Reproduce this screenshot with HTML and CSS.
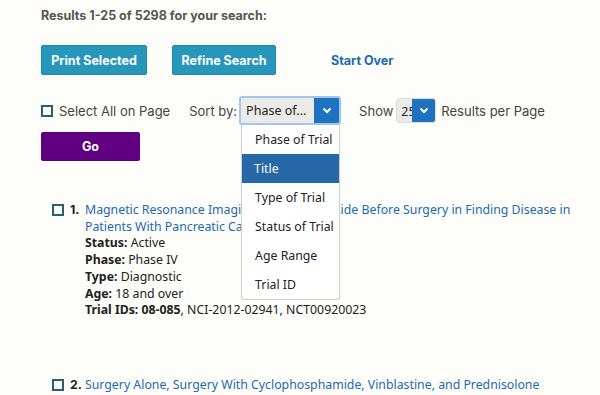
FILE: index.html
```html
<!DOCTYPE html>
<html lang="en">
  <head>
    <meta charset="UTF-8" />
    <title>Clinical Trials Search Results</title>
    <link rel="stylesheet" href="styles.css">
  </head>
  <body>
    <div class="page">
      <h3 class="summary">Results 1-25 of 5298 for your search:</h3>

      <div class="actions">
        <button class="btn btn-teal">Print Selected</button>
        <button class="btn btn-teal">Refine Search</button>
        <a class="start-over" href="#">Start Over</a>
      </div>

      <div class="controls">
        <label class="check-label"><span class="box"></span>Select All on Page</label>
        <span class="sort-label">Sort by:</span>
        <div class="select-wrap">
          <div class="select sort-select">
            <span class="select-text">Phase of...</span>
            <span class="select-arrow">
              <svg width="10" height="7" viewBox="0 0 10 7"><path d="M1.5 1.5 L5 5 L8.5 1.5" fill="none" stroke="#fff" stroke-width="2"/></svg>
            </span>
          </div>
          <ul class="dropdown">
            <li>Phase of Trial</li>
            <li class="active">Title</li>
            <li>Type of Trial</li>
            <li>Status of Trial</li>
            <li>Age Range</li>
            <li>Trial ID</li>
          </ul>
        </div>
        <span class="show-label">Show</span>
        <div class="select per-page">
          <span class="select-text">25</span>
          <span class="select-arrow">
            <svg width="10" height="7" viewBox="0 0 10 7"><path d="M1.5 1.5 L5 5 L8.5 1.5" fill="none" stroke="#fff" stroke-width="2"/></svg>
          </span>
        </div>
        <span class="per-page-label">Results per Page</span>
      </div>

      <button class="btn btn-go">Go</button>

      <ol class="results">
        <li class="result">
          <span class="box"></span>
          <span class="num">1.</span>
          <div class="result-body">
            <a href="#">Magnetic Resonance Imaging With Ferumoxide Before Surgery in Finding Disease in Patients With Pancreatic Cancer</a>
            <div><b>Status:</b> Active</div>
            <div><b>Phase:</b> Phase IV</div>
            <div><b>Type:</b> Diagnostic</div>
            <div><b>Age:</b> 18 and over</div>
            <div><b>Trial IDs: 08-085</b>, NCI-2012-02941, NCT00920023</div>
          </div>
        </li>
        <li class="result">
          <span class="box"></span>
          <span class="num">2.</span>
          <div class="result-body">
            <a href="#">Surgery Alone, Surgery With Cyclophosphamide, Vinblastine, and Prednisolone</a>
          </div>
        </li>
      </ol>
    </div>
  </body>
</html>
```

FILE: styles.css
```css
* {
  box-sizing: border-box;
  margin: 0;
  padding: 0;
}
body {
  background: #fdfdfa;
  font-family: Inter, sans-serif;
  color: #444;
  overflow: hidden;
}
.page {
  padding: 8px 0 0 41px;
}
.summary {
  font-size: 12.5px;
  font-weight: bold;
  color: #555;
  line-height: 16px;
}
.actions {
  display: flex;
  align-items: center;
  margin-top: 21px;
}
.btn {
  border: none;
  border-radius: 2px;
  color: #fff;
  font-family: Inter, sans-serif;
  font-weight: bold;
  font-size: 12.5px;
  height: 30px;
  cursor: pointer;
}
.btn-teal {
  background: #2697ba;
  border: 1px solid #1e88a8;
  width: 106px;
  margin-right: 25px;
}
.btn-teal + .btn-teal {
  width: 104px;
}
.start-over {
  color: #1d6ab0;
  font-weight: bold;
  font-size: 12.5px;
  text-decoration: none;
  margin-left: 30px;
}
.controls {
  display: flex;
  align-items: center;
  margin-top: 21px;
  height: 29px;
  font-size: 13px;
  color: #444;
}
.box {
  display: inline-block;
  width: 12px;
  height: 12px;
  border: 2px solid #2b5e70;
  background: #fff;
}
.check-label {
  display: flex;
  align-items: center;
  gap: 6px;
}
.sort-label {
  margin-left: 19px;
  margin-right: 2px;
}
.select-wrap {
  position: relative;
}
.select {
  display: flex;
  height: 25px;
  border-radius: 3px;
  overflow: hidden;
  font-family: "Noto Sans", sans-serif;
  font-size: 12.5px;
  color: #222;
}
.sort-select {
  width: 102px;
  border: 2px solid #9cc8ee;
  height: 29px;
}
.select-text {
  flex: 1;
  background: #eceae6;
  padding-left: 5px;
  line-height: 25px;
  overflow: hidden;
  white-space: nowrap;
}
.select-arrow {
  width: 25px;
  background: #1f72c0;
  display: flex;
  align-items: center;
  justify-content: center;
}
.dropdown {
  position: absolute;
  top: 29px;
  left: 2px;
  width: 99px;
  list-style: none;
  background: #fff;
  border: 1px solid #ccc;
  border-top: none;
  border-radius: 0 0 3px 3px;
  font-family: "Noto Sans", sans-serif;
  font-size: 12.3px;
  color: #222;
  z-index: 2;
}
.dropdown li {
  height: 29px;
  line-height: 29px;
  padding-left: 13px;
}
.dropdown li.active {
  background: #2668a8;
  color: #fff;
  padding-left: 12px;
}
.show-label {
  margin-left: 18px;
  margin-right: 3px;
}
.per-page {
  width: 40px;
  border: 1px solid #ddd;
}
.per-page .select-text {
  padding-left: 4px;
  background: #eceae6;
}
.per-page .select-arrow {
  width: 23px;
}
.per-page-label {
  margin-left: 5px;
}
.btn-go {
  background: #5f0082;
  width: 99px;
  height: 29px;
  margin-top: 7px;
}
.results {
  list-style: none;
  margin-top: 41px;
  padding-left: 11px;
  font-family: "Noto Sans", sans-serif;
  font-size: 12.3px;
  line-height: 16.7px;
  color: #222;
}
.result {
  display: flex;
  align-items: flex-start;
  margin-bottom: 58px;
}
.result .box {
  margin-top: 2px;
  flex-shrink: 0;
}
.num {
  width: 21px;
  padding-left: 6px;
  font-family: Inter, sans-serif;
  font-weight: bold;
  flex-shrink: 0;
}
.result-body {
  width: 490px;
}
.result-body a {
  color: #1d6ab0;
  text-decoration: none;
  display: block;
}
```
